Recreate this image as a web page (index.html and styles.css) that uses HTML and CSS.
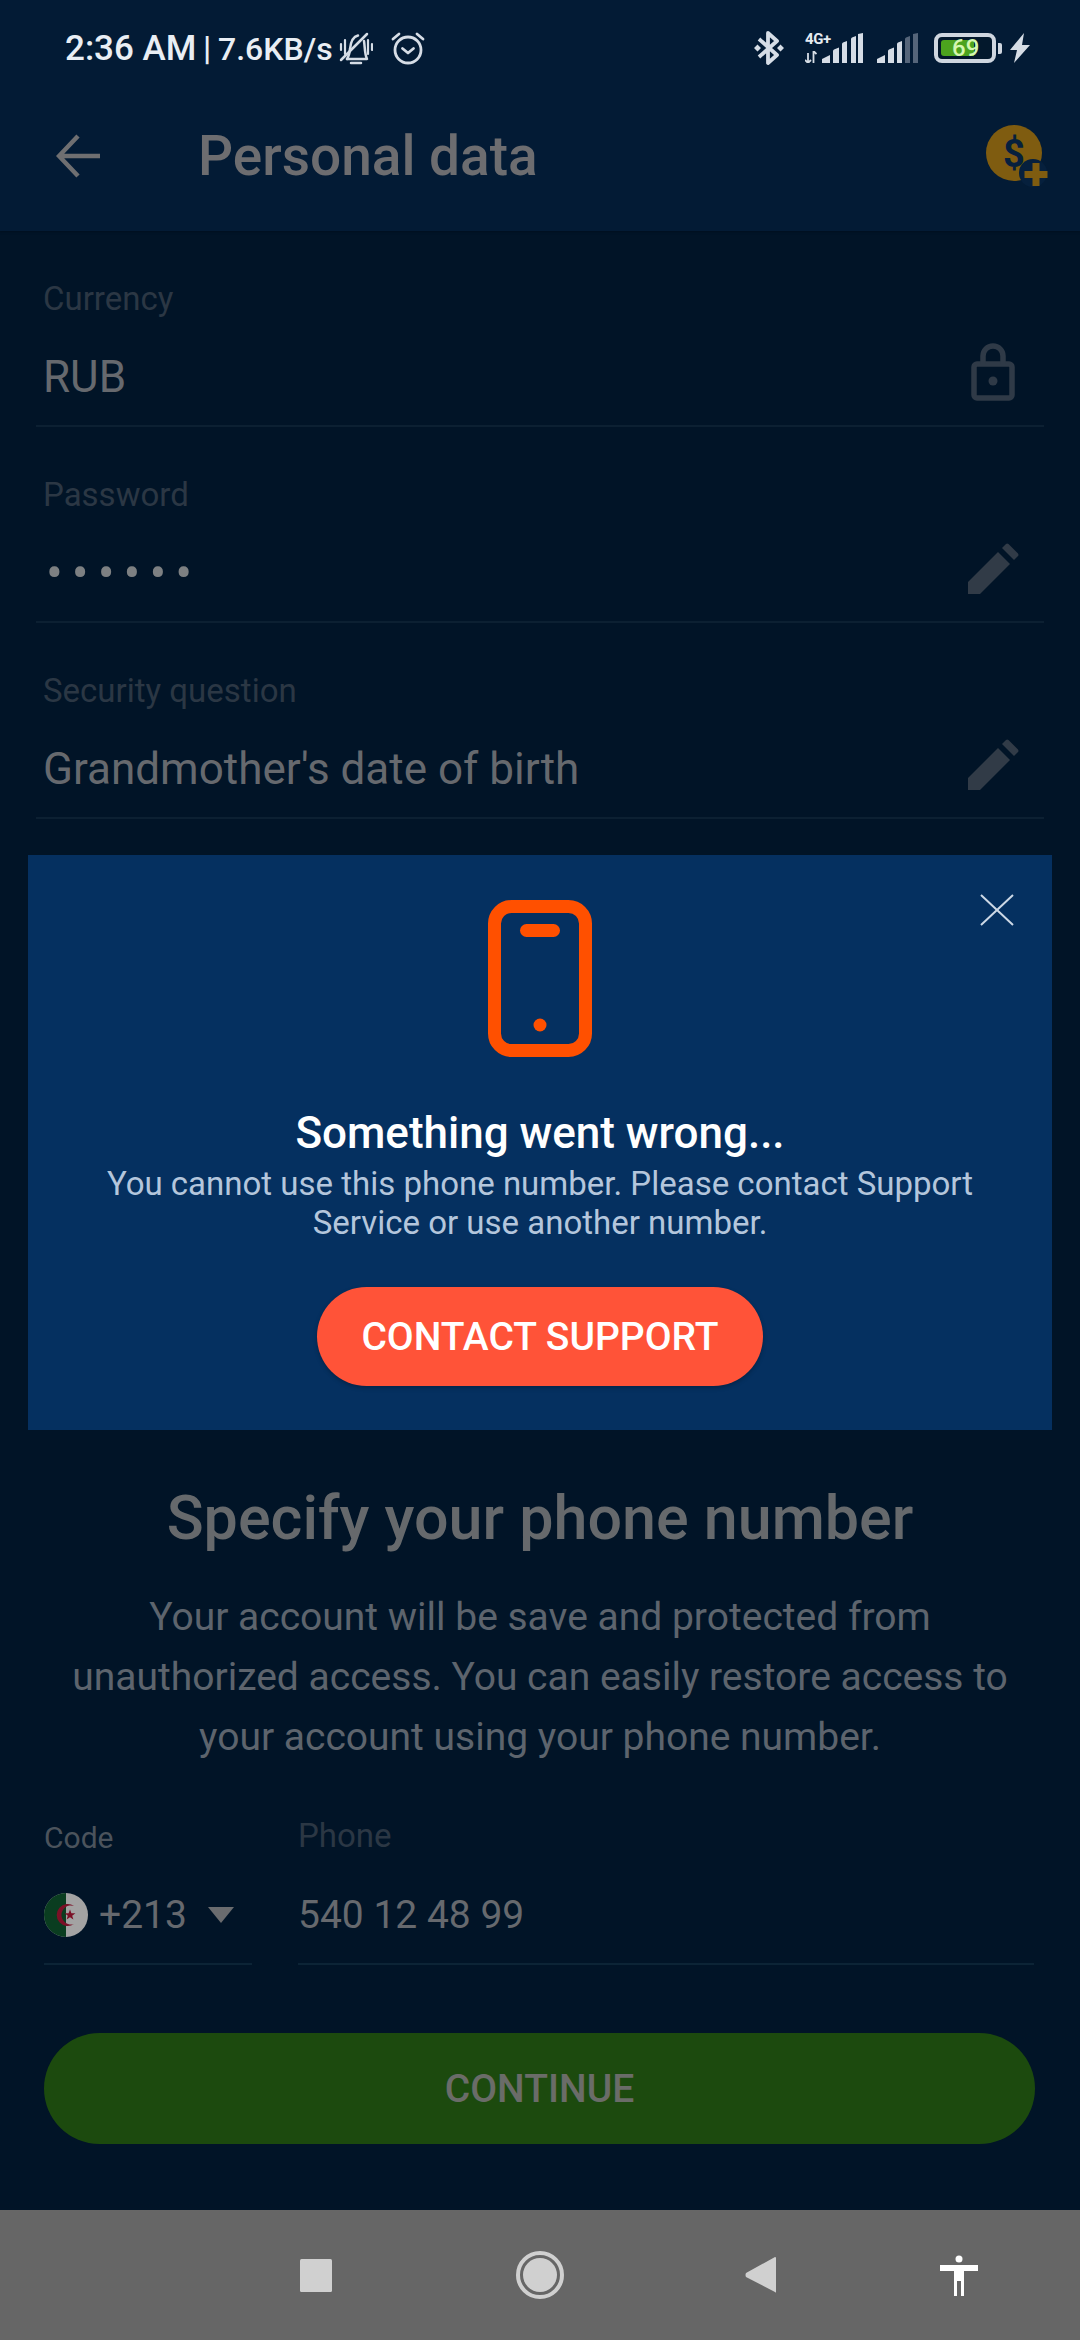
FILE: index.html
```html
<!DOCTYPE html>
<html lang="en">
<head>
<meta charset="utf-8">
<title>Personal data</title>
<link rel="stylesheet" href="styles.css">
</head>
<body>
<div class="page">
  <header class="top">
    <div class="status">
      <div class="status-left">
        <span class="status-text"><span class="time">2:36 AM</span> | <span class="speed">7.6KB/s</span></span>
        <svg class="ic-bell" viewBox="0 0 34 33" width="34" height="33" fill="none" stroke="#d6dde6" stroke-width="2.500" stroke-linecap="round" stroke-linejoin="round"><path d="M8 27c2-3 2.500-6 3-10 .5-5 1.500-12 8-13.500"/><path d="M25 9c1 6 .5 13 3 18H8"/><path d="M12 31h10"/><path d="M2 28 28 2"/><path d="M2 12v6M6 8v14M29 8v14M33 12v6" stroke-width="2.200"/></svg>
        <svg class="ic-alarm" viewBox="0 0 36 36" width="36" height="36" fill="none" stroke="#d6dde6" stroke-width="2.800" stroke-linecap="round" stroke-linejoin="round"><circle cx="18" cy="20" r="13"/><path d="M12.500 18.500 18 23l5.500-4.500"/><path d="M3 9l6-5M33 9l-6-5"/></svg>
      </div>
      <div class="status-right">
        <svg class="ic-bt" viewBox="0 0 30 36" width="30" height="36" fill="none" stroke="#d6dde6" stroke-width="3.800" stroke-linejoin="round"><path d="M5 9 23 25 14 33V3l9 8L5 27"/><path d="M3.500 14.500l3.500 3.500-3.500 3.500L0 18zM26.500 14.500l3.500 3.500-3.500 3.500L23 18z" fill="#d6dde6" stroke="none"/></svg>
        <div class="sig">
          <div class="net">
            <span class="net-label">4G+</span>
            <svg viewBox="0 0 12 12" width="12" height="12" fill="none" stroke="#d6dde6" stroke-width="1.800"><path d="M3 12V2M0 9l3 3 3-3M8.500 0v12M8.500 0l3 3"/></svg>
          </div>
          <svg viewBox="0 0 41 30" width="41" height="30" fill="#d6dde6"><path d="M0 30v-4l8-4v8zM11 30V18q0-1 1-1.500l5-2V30zM20 30V11q0-1 1-1.500l4-1.500V30zM29 30V6q0-1 1-1.500L34 3v27zM36 30V1l5-1v30z"/></svg>
        </div>
        <svg class="ic-sig2" viewBox="0 0 41 30" width="41" height="30"><path fill="#d6dde6" d="M0 30v-4l8-4v8zM11 30V18q0-1 1-1.500l5-2V30zM20 30V11q0-1 1-1.500l4-1.500V30z"/><path fill="#55657a" d="M28 30V6q0-1 1-1.500L33 3v27zM36 30V1l5-1v30z"/></svg>
        <div class="battery">
          <div class="cell"><div class="fill"></div><span class="pct">69</span></div>
          <div class="nub"></div>
        </div>
        <svg class="ic-bolt" viewBox="0 0 20 30" width="20" height="30" fill="#d6dde6"><path d="M14 0 0 17h7l-3 13L20 12h-8z"/></svg>
      </div>
    </div>
    <div class="appbar">
      <svg class="ic-back" viewBox="0 0 44 44" width="44" height="44" fill="none" stroke="#6f6f71" stroke-width="4.500"><path d="M44 22H4M22 2 3 22l19 20"/></svg>
      <h1 class="title">Personal data</h1>
      <svg class="ic-coin" viewBox="0 0 62 62" width="62" height="62"><circle cx="28" cy="28" r="28" fill="#7f5c10"/><circle cx="47" cy="48" r="14" fill="#06203d"/><path d="M46.500 38h7v8h8v7h-8v8h-7v-8h-8v-7h8z" fill="#7f5c10"/><text x="28" y="42" class="coin-d">$</text></svg>
    </div>
  </header>

  <section class="fields">
    <div class="field">
      <div class="label">Currency</div>
      <div class="value-row">
        <span class="value">RUB</span>
        <svg class="ic-lock" viewBox="0 0 44 58" width="44" height="58" fill="none" stroke="#2f3a47" stroke-width="5.500"><rect x="3" y="21" width="38" height="34" rx="3"/><path d="M12 21v-8a10 10 0 0 1 20 0v8"/><circle cx="22" cy="38" r="4.500" fill="#2f3a47" stroke="none"/></svg>
      </div>
    </div>
    <div class="field">
      <div class="label">Password</div>
      <div class="value-row">
        <span class="dots">••••••</span>
        <svg class="ic-pen" viewBox="0 0 51 51" width="51" height="51" fill="#313b47"><path d="M0 39 30 9l12 12-30 30H0z"/><path d="M34 5l4-4q1-1 2.500 0l9.500 9.500q1 1.500 0 2.500l-4 4z"/></svg>
      </div>
    </div>
    <div class="field">
      <div class="label">Security question</div>
      <div class="value-row">
        <span class="value">Grandmother's date of birth</span>
        <svg class="ic-pen" viewBox="0 0 51 51" width="51" height="51" fill="#313b47"><path d="M0 39 30 9l12 12-30 30H0z"/><path d="M34 5l4-4q1-1 2.500 0l9.500 9.500q1 1.500 0 2.500l-4 4z"/></svg>
      </div>
    </div>
  </section>

  <section class="modal">
    <svg class="ic-close" viewBox="0 0 34 32" width="34" height="32" fill="none" stroke="#cdd8e6" stroke-width="2"><path d="M1 1l32 30M33 1 1 31"/></svg>
    <svg class="ic-phone" viewBox="0 0 104 157" width="104" height="157"><rect x="6.500" y="6.500" width="91" height="144" rx="17" fill="none" stroke="#ff5000" stroke-width="13"/><rect x="32" y="24" width="40" height="13" rx="6.500" fill="#ff5000"/><circle cx="52" cy="125" r="6.500" fill="#ff5000"/></svg>
    <h2 class="modal-title">Something went wrong...</h2>
    <p class="modal-text">You cannot use this phone number. Please contact Support Service or use another number.</p>
    <div class="btn-support">CONTACT SUPPORT</div>
  </section>

  <section class="specify">
    <h2 class="specify-title">Specify your phone number</h2>
    <p class="specify-text">Your account will be save and protected from unauthorized access. You can easily restore access to your account using your phone number.</p>
    <div class="phone-row">
      <div class="code">
        <div class="label label-code">Code</div>
        <div class="value-row phone-value">
          <svg class="flag" viewBox="0 0 44 44" width="44" height="44"><circle cx="22" cy="22" r="22" fill="#a3a3a3"/><path d="M22 0a22 22 0 0 0 0 44z" fill="#0a3d20"/><path d="M30 13a11 11 0 1 0 0 18 9.500 9.500 0 1 1 0-18z" fill="#7b1026"/><path d="M26 16.500l1.400 3.800h4l-3.200 2.400 1.200 3.800-3.400-2.300-3.400 2.300 1.200-3.800-3.200-2.400h4z" fill="#7b1026"/></svg>
          <span class="value value-sm">+213</span>
          <span class="caret"></span>
        </div>
      </div>
      <div class="phone">
        <div class="label label-phone">Phone</div>
        <div class="value-row phone-value">
          <span class="value value-sm">540 12 48 99</span>
        </div>
      </div>
    </div>
    <div class="btn-continue">CONTINUE</div>
  </section>

  <nav class="navbar">
    <svg viewBox="0 0 32 33" width="32" height="33"><rect width="32" height="33" rx="1.500" fill="#d0d0d0"/></svg>
    <svg viewBox="0 0 48 48" width="48" height="48" fill="#d0d0d0"><circle cx="24" cy="24" r="22" fill="none" stroke="#d0d0d0" stroke-width="4"/><circle cx="24" cy="24" r="17"/></svg>
    <svg viewBox="0 0 31 36" width="31" height="36"><path d="M31 1v34q0 1-1 0L1 20q-1-2 0-4L30 0q1 0 1 1z" fill="#d0d0d0"/></svg>
    <svg viewBox="0 0 38 41" width="38" height="41" fill="#fff"><circle cx="19" cy="4" r="3.500"/><path d="M0 10h38v6H24v25h-3V26h-4v15h-3V16H0z"/></svg>
  </nav>
</div>
</body>
</html>
```
FILE: styles.css
```css
* { box-sizing: border-box; }
html, body { margin: 0; padding: 0; }
body { background: #011427; font-family: Roboto, "Liberation Sans", sans-serif; }
h1, h2, p { margin: 0; font-weight: 500; }

.page { width: 1080px; height: 2340px; display: flex; flex-direction: column; overflow: hidden; background: #011427; }

.top { background: #031b35; height: 231px; flex: none; box-shadow: 0 1px 2px #00101f; }
.status { height: 96px; display: flex; justify-content: space-between; align-items: center; padding: 0 50px 0 65px; }
.status-left { display: flex; align-items: center; }
.status-text { font-size: 33px; font-weight: 500; color: #e9eef4; white-space: nowrap; word-spacing: -1.500px; }
.time { font-size: 35px; word-spacing: 0; }
.speed { font-size: 32px; }
.ic-bell { margin-left: 6px; }
.ic-alarm { margin-left: 17px; }
.status-right { display: flex; align-items: center; }
.sig { display: flex; align-items: flex-end; margin-left: 21px; }
.net { display: flex; flex-direction: column; width: 17px; height: 30px; position: relative; justify-content: flex-end; }
.net-label { position: absolute; left: 0; top: -1px; font-size: 15px; line-height: 14px; font-weight: 700; color: #e6ebf1; letter-spacing: -.4px; }
.ic-sig2 { margin-left: 14px; }
.battery { display: flex; align-items: center; margin-left: 16px; }
.cell { width: 62px; height: 30px; border: 4.500px solid #cfd6df; border-radius: 8px; padding: 3px; position: relative; background: #03182c; }
.fill { width: 33px; height: 100%; background: #4ca31e; border-radius: 3px 0 0 3px; }
.pct { position: absolute; left: 14px; top: -3px; font-size: 24px; line-height: 28px; color: #d4f7b0; font-weight: 500; }
.nub { width: 4px; height: 11px; background: #cfd6df; margin-left: 2px; border-radius: 0 2px 2px 0; }
.ic-bolt { margin-left: 8px; }

.appbar { height: 135px; display: flex; align-items: center; padding: 0 32px 15px 56px; }
.title { font-size: 55px; line-height: 60px; color: #6d6d70; margin-left: 98px; flex: 1; font-weight: 500; }

.fields { flex: none; }
.field { margin: 0 36px; height: 196px; padding: 48px 0 0 7px; border-bottom: 2px solid #0c2032; }
.label { font-size: 33px; line-height: 40px; color: #2b3744; }
.value-row { display: flex; align-items: center; justify-content: space-between; height: 56px; margin-top: 30px; padding-right: 29px; }
.value { font-size: 44px; line-height: 56px; color: #66696e; white-space: nowrap; }
.dots { font-size: 50px; line-height: 56px; letter-spacing: 9px; color: #7d8082; margin-left: 3px; }
.ic-lock, .ic-pen { margin-bottom: 10px; }
.ic-pen { margin-right: -4px; }

.modal { flex: none; margin: 36px 28px 0; height: 575px; background: #053060; position: relative; display: flex; flex-direction: column; align-items: center; padding-top: 45px; }
.ic-close { position: absolute; top: 39px; right: 38px; }
.modal-title { font-size: 44px; line-height: 50px; color: #fff; margin-top: 51px; font-weight: 500; }
.modal-text { width: 900px; margin-top: 6px; font-size: 33px; line-height: 39px; color: #b4c6dc; text-align: center; font-weight: 400; }
.btn-support { margin-top: 45px; width: 446px; height: 99px; border-radius: 50px; background: #ff5338; color: #fff; font-size: 39px; font-weight: 500; display: flex; align-items: center; justify-content: center; box-shadow: 0 2px 4px rgba(0,0,0,.25); }

.specify { flex: 1; display: flex; flex-direction: column; padding: 53px 44px 0; }
.specify-title { font-size: 61px; line-height: 70px; color: #66696c; text-align: center; font-weight: 500; }
.specify-text { margin: 34px 11px 0; font-size: 39px; line-height: 60px; color: #5d646d; text-align: center; font-weight: 400; }
.phone-row { display: grid; grid-template-columns: 208px 1fr; column-gap: 46px; margin-top: 51px; margin-right: 2px; }
.code, .phone { height: 147px; border-bottom: 2px solid #0c2436; }
.label-code { color: #4b535c; font-size: 30px; }
.label-phone { color: #2b3744; margin-top: -2px; }
.phone-value { justify-content: flex-start; padding-right: 0; margin-top: 29px; }
.phone .phone-value { margin-top: 31px; }
.value-sm { font-size: 39px; }
.flag { margin-right: 11px; flex: none; }
.caret { width: 0; height: 0; border-left: 13px solid transparent; border-right: 13px solid transparent; border-top: 16px solid #6a6c6f; margin-left: 21px; }
.btn-continue { margin-top: 68px; height: 111px; width: 991px; border-radius: 56px; background: #1c4a0e; color: #6a6c68; font-size: 39px; font-weight: 500; display: flex; align-items: center; justify-content: center; }

.navbar { flex: none; height: 130px; background: #666; display: grid; grid-template-columns: 224px 224px 216px 182px; padding-left: 204px; justify-items: center; align-items: center; }

.coin-d { font-family: Roboto, sans-serif; font-size: 38px; font-weight: 700; fill: #06203d; text-anchor: middle; }
```
